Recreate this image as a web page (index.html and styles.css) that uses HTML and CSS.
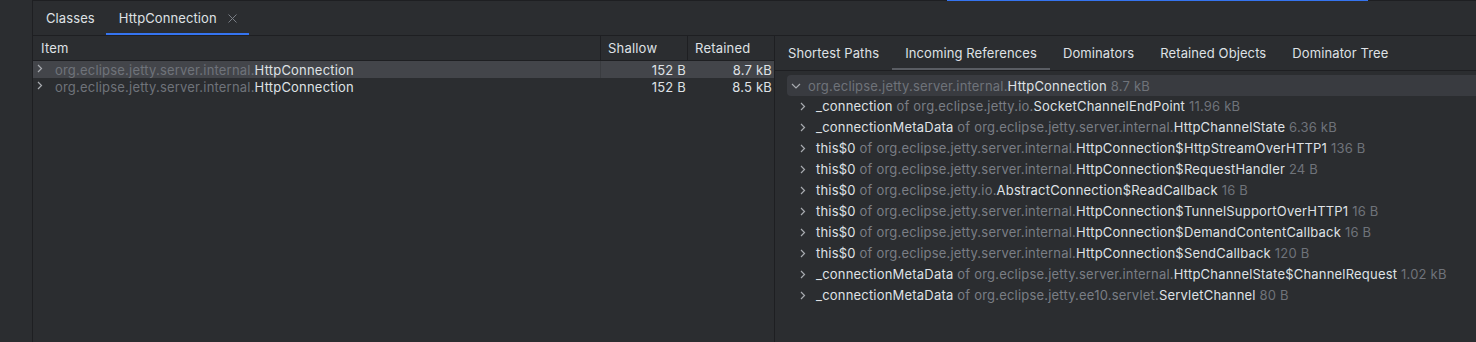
FILE: index.html
```html
<!DOCTYPE html>
<html>
<head>
<meta charset="utf-8">
<link rel="stylesheet" href="styles.css">
</head>
<body>
<div class="app">
  <div class="sidebar"></div>
  <div class="main">
    <div class="topline"><div class="spacer"></div><div class="progress"></div></div>
    <div class="tabbar">
      <div class="tab">Classes</div>
      <div class="tab active">HttpConnection<span class="close"><svg width="9" height="9" viewBox="0 0 9 9"><path d="M0.5 0.5l8 8M8.5 0.5l-8 8" stroke="#7a7e85" stroke-width="1"/></svg></span></div>
    </div>
    <div class="content">
      <div class="left">
        <div class="grid head">
          <div class="cell c1">Item</div>
          <div class="cell c2">Shallow</div>
          <div class="cell c3">Retained</div>
        </div>
        <div class="grid row sel">
          <div class="cell c1"><span class="chev"><svg width="6" height="9" viewBox="0 0 6 9"><path d="M1 1l3.5 3.5L1 8" fill="none" stroke="#a8abb0" stroke-width="1.2"/></svg></span><span class="pkg">org.eclipse.jetty.server.internal.</span>HttpConnection</div>
          <div class="cell c2 num">152 B</div>
          <div class="cell c3 num">8.7 kB</div>
        </div>
        <div class="grid row">
          <div class="cell c1"><span class="chev"><svg width="6" height="9" viewBox="0 0 6 9"><path d="M1 1l3.5 3.5L1 8" fill="none" stroke="#a8abb0" stroke-width="1.2"/></svg></span><span class="pkg">org.eclipse.jetty.server.internal.</span>HttpConnection</div>
          <div class="cell c2 num">152 B</div>
          <div class="cell c3 num">8.5 kB</div>
        </div>
      </div>
      <div class="right">
        <div class="tabbar2">
          <div class="tab2">Shortest Paths</div>
          <div class="tab2 active2">Incoming References</div>
          <div class="tab2">Dominators</div>
          <div class="tab2">Retained Objects</div>
          <div class="tab2">Dominator Tree</div>
        </div>
        <div class="tree">
          <div class="root"><span class="rchev"><svg width="10" height="6" viewBox="0 0 10 6"><path d="M1 1l4 4 4-4" fill="none" stroke="#a8abb0" stroke-width="1.2"/></svg></span><span class="pkg">org.eclipse.jetty.server.internal.</span>HttpConnection <span class="size">8.7 kB</span></div>
          <div class="node"><span class="nchev"><svg width="6" height="9" viewBox="0 0 6 9"><path d="M1 1l3.5 3.5L1 8" fill="none" stroke="#a8abb0" stroke-width="1.2"/></svg></span>_connection <span class="of">of org.eclipse.jetty.io.</span>SocketChannelEndPoint <span class="size">11.96 kB</span></div>
          <div class="node"><span class="nchev"><svg width="6" height="9" viewBox="0 0 6 9"><path d="M1 1l3.5 3.5L1 8" fill="none" stroke="#a8abb0" stroke-width="1.2"/></svg></span>_connectionMetaData <span class="of">of org.eclipse.jetty.server.internal.</span>HttpChannelState <span class="size">6.36 kB</span></div>
          <div class="node"><span class="nchev"><svg width="6" height="9" viewBox="0 0 6 9"><path d="M1 1l3.5 3.5L1 8" fill="none" stroke="#a8abb0" stroke-width="1.2"/></svg></span>this$0 <span class="of">of org.eclipse.jetty.server.internal.</span>HttpConnection$HttpStreamOverHTTP1 <span class="size">136 B</span></div>
          <div class="node"><span class="nchev"><svg width="6" height="9" viewBox="0 0 6 9"><path d="M1 1l3.5 3.5L1 8" fill="none" stroke="#a8abb0" stroke-width="1.2"/></svg></span>this$0 <span class="of">of org.eclipse.jetty.server.internal.</span>HttpConnection$RequestHandler <span class="size">24 B</span></div>
          <div class="node"><span class="nchev"><svg width="6" height="9" viewBox="0 0 6 9"><path d="M1 1l3.5 3.5L1 8" fill="none" stroke="#a8abb0" stroke-width="1.2"/></svg></span>this$0 <span class="of">of org.eclipse.jetty.io.</span>AbstractConnection$ReadCallback <span class="size">16 B</span></div>
          <div class="node"><span class="nchev"><svg width="6" height="9" viewBox="0 0 6 9"><path d="M1 1l3.5 3.5L1 8" fill="none" stroke="#a8abb0" stroke-width="1.2"/></svg></span>this$0 <span class="of">of org.eclipse.jetty.server.internal.</span>HttpConnection$TunnelSupportOverHTTP1 <span class="size">16 B</span></div>
          <div class="node"><span class="nchev"><svg width="6" height="9" viewBox="0 0 6 9"><path d="M1 1l3.5 3.5L1 8" fill="none" stroke="#a8abb0" stroke-width="1.2"/></svg></span>this$0 <span class="of">of org.eclipse.jetty.server.internal.</span>HttpConnection$DemandContentCallback <span class="size">16 B</span></div>
          <div class="node"><span class="nchev"><svg width="6" height="9" viewBox="0 0 6 9"><path d="M1 1l3.5 3.5L1 8" fill="none" stroke="#a8abb0" stroke-width="1.2"/></svg></span>this$0 <span class="of">of org.eclipse.jetty.server.internal.</span>HttpConnection$SendCallback <span class="size">120 B</span></div>
          <div class="node"><span class="nchev"><svg width="6" height="9" viewBox="0 0 6 9"><path d="M1 1l3.5 3.5L1 8" fill="none" stroke="#a8abb0" stroke-width="1.2"/></svg></span>_connectionMetaData <span class="of">of org.eclipse.jetty.server.internal.</span>HttpChannelState$ChannelRequest <span class="size">1.02 kB</span></div>
          <div class="node"><span class="nchev"><svg width="6" height="9" viewBox="0 0 6 9"><path d="M1 1l3.5 3.5L1 8" fill="none" stroke="#a8abb0" stroke-width="1.2"/></svg></span>_connectionMetaData <span class="of">of org.eclipse.jetty.ee10.servlet.</span>ServletChannel <span class="size">80 B</span></div>
        </div>
      </div>
    </div>
  </div>
</div>
</body>
</html>
```
FILE: styles.css
```css
* { box-sizing: border-box; }
html, body { margin: 0; padding: 0; }
body {
  background: #2b2d30;
  color: #dfe1e5;
  font-family: Inter, "Noto Sans", "Liberation Sans", sans-serif;
  font-size: 13px;
  letter-spacing: 0.2px;
  width: 1476px;
  height: 342px;
  overflow: hidden;
}
.app { display: flex; height: 342px; }
.sidebar { width: 33px; flex: none; border-right: 1px solid #1e1f22; }
.main { flex: 1; display: flex; flex-direction: column; min-width: 0; }
.topline { display: flex; height: 1px; background: #1e1f22; flex: none; }
.spacer { width: 914px; }
.progress { width: 421px; background: #3574f0; }
.tabbar {
  display: flex;
  height: 35px;
  flex: none;
  border-bottom: 1px solid #1e1f22;
}
.tab {
  padding: 2px 11px 0 13px;
  display: flex;
  align-items: center;
  height: 34px;
  border-bottom: 2px solid transparent;
  white-space: nowrap;
  letter-spacing: 0.1px;
}
.tab.active { border-bottom-color: #3574f0; padding-right: 12px; padding-left: 13px; }
.close { display: inline-flex; margin-left: 11px; margin-top: 1px; }
.content { display: flex; flex: 1; }
.left { width: 742px; flex: none; border-right: 1px solid #1e1f22; }
.grid { display: grid; grid-template-columns: 568px 87px 86px; }
.head { height: 25px; border-bottom: 1px solid #1e1f22; }
.head .cell { display: flex; align-items: center; }
.head .c1 { padding-left: 8px; border-right: 1px solid #1e1f22; }
.head .c2 { padding-left: 7px; border-right: 1px solid #1e1f22; }
.head .c3 { padding-left: 7px; }
.row { height: 17px; }
.row .cell { display: flex; align-items: center; white-space: nowrap; }
.row .c1 { padding-left: 4px; border-right: 1px solid transparent; }
.row .num { justify-content: flex-end; padding-right: 2px; }
.row.sel .cell { background: #43454a; }
.row.sel .c1 { border-right-color: #3a3c40; }
.chev { width: 18px; display: inline-flex; align-items: center; padding-bottom: 3px; }
.pkg { color: #6f737a; }
.right { flex: 1; min-width: 0; }
.tabbar2 { display: flex; height: 35px; border-bottom: 1px solid #1e1f22; }
.tab2 {
  padding: 2px 13px 0;
  display: flex;
  align-items: center;
  height: 34px;
  border-bottom: 2px solid transparent;
  white-space: nowrap;
  letter-spacing: 0.1px;
}
.tab2.active2 { border-bottom-color: #5a5d63; }
.tree { padding-top: 4px; }
.root {
  margin-left: 12px;
  height: 21px;
  line-height: 21px;
  padding-top: 1px;
  background: #393b40;
  border-radius: 4px 0 0 4px;
  white-space: nowrap;
}
.rchev { width: 21px; padding-left: 4px; display: inline-block; vertical-align: top; }
.rchev svg { display: block; margin-top: 7px; }
.size { color: #6f737a; }
.node {
  height: 21px;
  line-height: 21px;
  white-space: nowrap;
  padding-left: 25px;
}
.nchev { width: 16px; display: inline-block; vertical-align: top; }
.nchev svg { display: block; margin-top: 6px; }
.of { color: #7a7e85; }
```
